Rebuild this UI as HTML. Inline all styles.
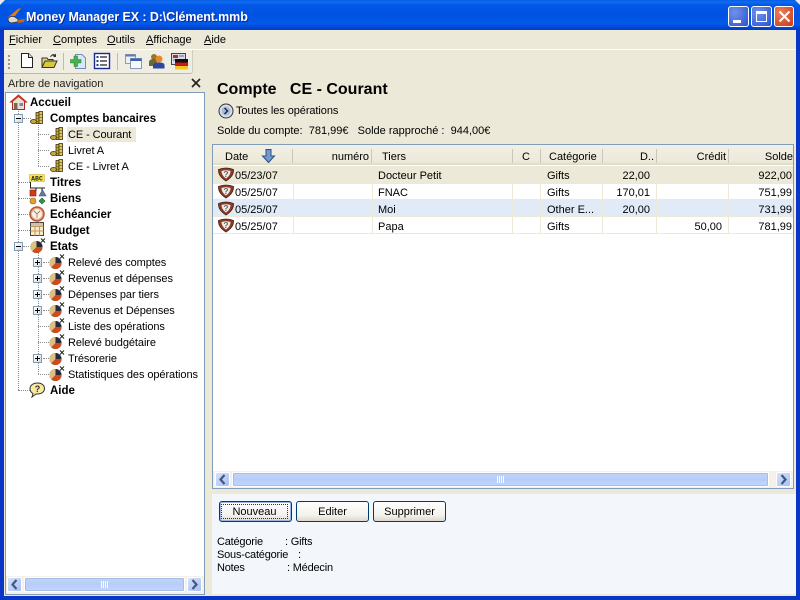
<!DOCTYPE html>
<html><head><meta charset="utf-8">
<style>
html,body{margin:0;padding:0;width:800px;height:600px;overflow:hidden;background:#0a36c8}
body{position:relative;font:11px/14px "Liberation Sans",sans-serif;color:#000}
.a,.t{position:absolute;white-space:nowrap}
.t{line-height:14px;margin-top:1px}
.b{font-weight:bold;letter-spacing:0;font-size:11.5px}
.l{letter-spacing:-.08px}
.n{letter-spacing:-.2px}
svg{position:absolute;overflow:visible}
.m{text-decoration:none}
.m u{text-decoration:underline}
.r{text-align:right}
.btn{position:absolute;top:501px;height:19px;border:1px solid #003c74;border-radius:3px;background:linear-gradient(#fff,#f3f2ec 70%,#dcd8cc);text-align:center;line-height:20px}
.sb{position:absolute;height:15px;border-radius:2px;background:linear-gradient(#c3d3fb,#b6cdfa 50%,#c6d6fc);border:1px solid #fff;box-sizing:border-box;box-shadow:0 0 0 1px #a8bce8 inset}
.ar{position:absolute;width:15px;height:15px;border-radius:2px;background:linear-gradient(135deg,#d4e0fd,#aac0f4);border:1px solid #fff;box-sizing:border-box}
.vl{position:absolute;width:1px;background:#ece9d8}
.hd{position:absolute;width:1px;top:149px;height:14px;background:#cbc7b8}
.exp{position:absolute;width:9px;height:9px;box-sizing:border-box;border:1px solid #7f9db9;background:linear-gradient(135deg,#fff,#dcd8cc)}
.exp:before{content:"";position:absolute;left:1px;top:3px;width:5px;height:1px;background:#000}
.exp.p:after{content:"";position:absolute;left:3px;top:1px;width:1px;height:5px;background:#000}
.dv{position:absolute;border-left:1px dotted #8a8a8a}
.dh{position:absolute;border-top:1px dotted #8a8a8a}
</style></head><body>
<svg width="0" height="0" style="position:absolute"><defs>
<g id="coin"><rect x="6" y="1.500" width="3" height="11" fill="#c9a93e" stroke="#3c3210" stroke-width=".8"/><rect x="9" y="0.500" width="3.500" height="12" fill="#e0c45c" stroke="#3c3210" stroke-width=".8"/><ellipse cx="3.500" cy="10.500" rx="3" ry="2" fill="#c9a93e" stroke="#3c3210" stroke-width=".8"/><path d="M6 4.500h3M6 7.500h3M6 10.500h3M9 3.500h3.500M9 6.500h3.500M9 9.500h3.500" stroke="#4c4014" stroke-width=".6"/></g>
<g id="pie"><circle cx="6.500" cy="9" r="6" fill="#3c3c3c"/><path d="M6.500 9V3A6 6 0 0 1 12.500 9Z" fill="#262a3a"/><path d="M6.500 9H12.500A6 6 0 0 1 2.300 13.300Z" fill="#d24a1a"/><path d="M6.500 9L2.300 13.300A6 6 0 0 1 6.500 3Z" fill="#dcc080"/><path d="M11 .5l4 4M15 .5l-4 4" stroke="#222" stroke-width="1"/></g>
<g id="shield"><path d="M.5 2.500Q8-.5 15.500 2.500Q16 9 8 14Q0 9 .5 2.500Z" fill="#8c3a24" stroke="#4a2418" stroke-width=".8"/><path d="M3.500 4Q8 2.500 12.500 4Q12.500 8.500 8 11.500Q3.500 8.500 3.500 4Z" fill="#f2ece6"/><text x="8" y="10" font-size="8.500" font-weight="bold" text-anchor="middle" font-family="Liberation Sans" fill="#666">?</text></g>
<g id="lft"><path d="M9.500 3L5.500 7.500L9.500 12" fill="none" stroke="#43587e" stroke-width="2.200"/></g>
<g id="rgt"><path d="M5.500 3L9.500 7.500L5.500 12" fill="none" stroke="#43587e" stroke-width="2.200"/></g>
</defs></svg>

<!-- title bar -->
<div class="a" style="left:0;top:0;width:800px;height:30px;background:linear-gradient(#0a5ce0 0,#0b6cf4 2px,#0457e6 5px,#0053e1 14px,#0258ea 24px,#0040c8 29px);border-radius:7px 7px 0 0"></div>
<div class="a" style="left:0;top:0;width:5px;height:5px;background:#e8e8e8;clip-path:polygon(0 0,100% 0,0 100%)"></div>
<div class="a" style="left:795px;top:0;width:5px;height:5px;background:#e8e8e8;clip-path:polygon(0 0,100% 0,100% 100%)"></div>
<svg style="left:6px;top:7px" width="18" height="18"><path d="M1 11L12 2L15 1L9 9Z" fill="#e07a1e"/><path d="M2 12Q4 8 9 10L13 13L11 15L5 16Q2 15 2 12Z" fill="#d8d8d8" stroke="#333" stroke-width=".8"/><path d="M11 13L19 12L18 15L12 16Z" fill="#c8641a"/></svg>
<div class="t" style="left:26px;top:8px;color:#fff;font-size:12.5px;font-weight:bold;letter-spacing:-.1px;line-height:16px;text-shadow:1px 1px 0 #0a2a9c">Money Manager EX : D:\Clément.mmb</div>
<!-- window buttons -->
<div class="a" style="left:728px;top:6px;width:21px;height:21px;box-sizing:border-box;border:1px solid #fff;border-radius:3px;background:radial-gradient(circle at 30% 30%,#6f92ec,#2a52d0)"><div class="a" style="left:4px;top:13px;width:8px;height:3px;background:#fff"></div></div>
<div class="a" style="left:751px;top:6px;width:21px;height:21px;box-sizing:border-box;border:1px solid #fff;border-radius:3px;background:radial-gradient(circle at 30% 30%,#6f92ec,#2a52d0)"><div class="a" style="left:4px;top:4px;width:11px;height:11px;box-sizing:border-box;border:1px solid #fff;border-top-width:3px"></div></div>
<div class="a" style="left:774px;top:6px;width:20px;height:21px;box-sizing:border-box;border:1px solid #fff;border-radius:3px;background:radial-gradient(circle at 30% 30%,#e8805c,#c83a14)"><svg style="left:3px;top:3px" width="13" height="13"><path d="M1.500 1.500L11.500 11.500M11.500 1.500L1.500 11.500" stroke="#fff" stroke-width="2"/></svg></div>

<!-- client -->
<div class="a" style="left:4px;top:30px;width:792px;height:566px;background:#ece9d8"></div>
<div class="a" style="left:4px;top:49px;width:792px;height:1px;background:#fff"></div>
<div class="t m" style="left:9px;top:32px"><u>F</u>ichier</div>
<div class="t m" style="left:53px;top:32px"><u>C</u>omptes</div>
<div class="t m" style="left:107px;top:32px"><u>O</u>utils</div>
<div class="t m" style="left:146px;top:32px"><u>A</u>ffichage</div>
<div class="t m" style="left:204px;top:32px"><u>A</u>ide</div>

<!-- toolbar -->
<div class="a" style="left:4px;top:50px;width:188px;height:23px;background:#f0eee2;border-bottom:1px solid #bfbcab;border-right:1px solid #d0cdbc;border-radius:0 0 3px 0"></div>
<svg style="left:7px;top:54px" width="4" height="18"><path d="M1 1h2v2H1zM1 5h2v2H1zM1 9h2v2H1zM1 13h2v2H1z" fill="#9a978a"/></svg>
<svg style="left:20px;top:53px" width="14" height="16"><path d="M1.500.5H8.500L12.500 4.500V14.500H1.500Z" fill="#fff" stroke="#222"/><path d="M8.500.5V4.500H12.500" fill="#ddd" stroke="#222"/></svg>
<svg style="left:41px;top:53px" width="17" height="16"><path d="M1 13.500V5H6L7 6.500H12V8" fill="#e8d870" stroke="#333"/><path d="M1 14.500L4 8H16L13 14.500Z" fill="#d8c83c" stroke="#333"/><path d="M9 4Q11 0 14 1.500L15 .5V4H12L13 3Q11 2 10 4" fill="#333"/></svg>
<div class="a" style="left:63px;top:53px;width:1px;height:17px;background:#bfbcab"></div>
<svg style="left:70px;top:53px" width="17" height="17"><path d="M5.500 1.500H12L15.500 5V15.500H5.500Z" fill="#d8e8fa" stroke="#6f8fb8"/><path d="M4 3H7.500V6.500H11V10H7.500V13.500H4V10H.5V6.500H4Z" fill="#48b050" stroke="#2a8a3a" stroke-width=".6"/></svg>
<svg style="left:94px;top:53px" width="16" height="16"><rect x=".5" y=".5" width="15" height="15" fill="#fff" stroke="#1a2a8c" stroke-width="1.400"/><path d="M6 4h7M6 8h7M6 12h7" stroke="#222" stroke-width="1.300"/><path d="M2.500 3h2v2h-2zM2.500 7h2v2h-2zM2.500 11h2v2h-2z" fill="#1a3fa8"/></svg>
<div class="a" style="left:117px;top:53px;width:1px;height:17px;background:#bfbcab"></div>
<svg style="left:125px;top:54px" width="17" height="15"><rect x=".5" y=".5" width="10" height="9" fill="#eef0f4" stroke="#9a9a9a"/><rect x=".5" y=".5" width="10" height="2" fill="#5a7ab8"/><rect x="5.500" y="4.500" width="11" height="10" fill="#f6f8fc" stroke="#8a9ab0"/><rect x="5.500" y="4.500" width="11" height="2.500" fill="#3a60b0"/></svg>
<svg style="left:148px;top:53px" width="17" height="16"><circle cx="6" cy="4" r="3" fill="#a07030"/><path d="M1 13V9Q1 6 6 6Q9 6 9 9V13Z" fill="#6a6a30"/><circle cx="11" cy="6" r="3.500" fill="#e88a2a"/><path d="M5 15.500V12Q5 9.500 11 9.500Q16.500 9.500 16.500 12V15.500Z" fill="#2a48a0"/></svg>
<svg style="left:171px;top:53px" width="17" height="17"><rect x=".5" y=".5" width="14" height="11" fill="#d8dce8" stroke="#444"/><rect x="2" y="2" width="5" height="3" fill="#b03030"/><path d="M2 7h10M8 3h5" stroke="#5a6a9a"/><rect x="4" y="6" width="13" height="3.500" fill="#111"/><rect x="4" y="9.500" width="13" height="3.500" fill="#c81818"/><rect x="4" y="13" width="13" height="3.500" fill="#f0c820"/></svg>

<!-- nav panel -->
<div class="a" style="left:4px;top:74px;width:202px;height:522px;background:#ece9d8"></div>
<div class="t" style="left:8px;top:76px;color:#222">Arbre de navigation</div>
<svg style="left:191px;top:78px" width="10" height="10"><path d="M1 1L9 9M9 1L1 9" stroke="#222" stroke-width="1.700"/></svg>
<div class="a" style="left:5px;top:92px;width:200px;height:503px;box-sizing:border-box;border:1px solid #7f9db9;background:#fff"></div>

<!-- tree lines -->
<div class="dv" style="left:18px;top:108px;height:282px"></div>
<div class="dv" style="left:38px;top:122px;height:44px"></div>
<div class="dv" style="left:38px;top:252px;height:122px"></div>
<div class="dh" style="left:23px;top:118px;width:8px"></div>
<div class="dh" style="left:38px;top:134px;width:11px"></div>
<div class="dh" style="left:38px;top:150px;width:11px"></div>
<div class="dh" style="left:38px;top:166px;width:11px"></div>
<div class="dh" style="left:18px;top:182px;width:12px"></div>
<div class="dh" style="left:18px;top:198px;width:12px"></div>
<div class="dh" style="left:18px;top:214px;width:12px"></div>
<div class="dh" style="left:18px;top:230px;width:12px"></div>
<div class="dh" style="left:23px;top:246px;width:8px"></div>
<div class="dh" style="left:18px;top:390px;width:12px"></div>
<div class="dh" style="left:43px;top:262px;width:6px"></div>
<div class="dh" style="left:43px;top:278px;width:6px"></div>
<div class="dh" style="left:43px;top:294px;width:6px"></div>
<div class="dh" style="left:43px;top:310px;width:6px"></div>
<div class="dh" style="left:38px;top:326px;width:11px"></div>
<div class="dh" style="left:38px;top:342px;width:11px"></div>
<div class="dh" style="left:43px;top:358px;width:6px"></div>
<div class="dh" style="left:38px;top:374px;width:11px"></div>

<div class="exp" style="left:14px;top:114px"></div>
<div class="exp" style="left:14px;top:242px"></div>
<div class="exp p" style="left:33px;top:258px"></div>
<div class="exp p" style="left:33px;top:274px"></div>
<div class="exp p" style="left:33px;top:290px"></div>
<div class="exp p" style="left:33px;top:306px"></div>
<div class="exp p" style="left:33px;top:354px"></div>

<!-- tree icons -->
<svg style="left:10px;top:94px" width="17" height="16"><path d="M8.500 1L16.500 8H14.500V15.500H2.500V8H.5Z" fill="#e8e0d0" stroke="#b02818" stroke-width="1"/><path d="M8.500 1L16.500 8L14.500 8L8.500 3L2.500 8L.5 8Z" fill="#d03020"/><rect x="4" y="9" width="3.500" height="6.500" fill="#786858"/><rect x="9.500" y="9" width="3.500" height="3" fill="#6a8ac0"/></svg>
<svg style="left:30px;top:111px" width="15" height="15"><use href="#coin"/></svg>
<svg style="left:50px;top:127px" width="15" height="15"><use href="#coin"/></svg>
<svg style="left:50px;top:143px" width="15" height="15"><use href="#coin"/></svg>
<svg style="left:50px;top:159px" width="15" height="15"><use href="#coin"/></svg>
<svg style="left:29px;top:174px" width="17" height="10"><rect x=".5" y=".5" width="15" height="7" fill="#f8e850" stroke="#c8a020" stroke-dasharray="1 1"/><text x="8" y="6.500" font-size="6.500" font-weight="bold" text-anchor="middle" font-family="Liberation Mono" fill="#222">ABC</text></svg>
<svg style="left:28px;top:182px" width="18" height="24"><path d="M2.500 0V6H17M8 6V9M14 6V9" stroke="#222" fill="none"/><rect x="2" y="8" width="6" height="6" fill="#d83818" stroke="#7a2010" stroke-width=".6"/><path d="M11 14L14.500 8L18 14Z" fill="#6a7a9a" stroke="#3a4a6a" stroke-width=".6"/><circle cx="5" cy="19" r="3" fill="#e8a030" stroke="#8a5a10" stroke-width=".6"/><path d="M14 16L17 19L14 22L11 19Z" fill="#389048" stroke="#1a6028" stroke-width=".6"/></svg>
<svg style="left:29px;top:206px" width="16" height="16"><circle cx="8" cy="8" r="7" fill="#e8a890" stroke="#b85830" stroke-width="1.500"/><circle cx="8" cy="8" r="5" fill="#f8f4ec"/><path d="M8 8L4.500 4.500M8 8L11 5M8 8V12" stroke="#a88850" stroke-width="1"/></svg>
<svg style="left:30px;top:222px" width="15" height="15"><rect x=".5" y=".5" width="13" height="13" fill="#f6ecc8" stroke="#444"/><path d="M.5 4.500H13.500M.5 9H13.500M5 .5V13.500M9.500 .5V13.500" stroke="#c89858"/><rect x="1" y="1" width="12" height="3" fill="#c8c4b8"/></svg>
<svg style="left:30px;top:238px" width="17" height="16"><use href="#pie"/></svg>
<svg style="left:49px;top:254px" width="17" height="16"><use href="#pie"/></svg>
<svg style="left:49px;top:270px" width="17" height="16"><use href="#pie"/></svg>
<svg style="left:49px;top:286px" width="17" height="16"><use href="#pie"/></svg>
<svg style="left:49px;top:302px" width="17" height="16"><use href="#pie"/></svg>
<svg style="left:49px;top:318px" width="17" height="16"><use href="#pie"/></svg>
<svg style="left:49px;top:334px" width="17" height="16"><use href="#pie"/></svg>
<svg style="left:49px;top:350px" width="17" height="16"><use href="#pie"/></svg>
<svg style="left:49px;top:366px" width="17" height="16"><use href="#pie"/></svg>
<svg style="left:29px;top:382px" width="17" height="17"><path d="M8.500 1C13 1 15.500 3.500 15.500 6.500C15.500 9.500 13 12 8.500 12H7L3 15L4 11.500C2 10.500 1 8.500 1 6.500C1 3.500 4 1 8.500 1Z" fill="#f8e8a0" stroke="#333"/><text x="8.500" y="10" font-size="9" font-weight="bold" text-anchor="middle" font-family="Liberation Sans" fill="#333">?</text></svg>

<!-- tree labels -->
<div class="t b" style="left:30px;top:95px">Accueil</div>
<div class="t b" style="left:50px;top:111px">Comptes bancaires</div>
<div class="a" style="left:67px;top:127px;width:69px;height:15px;background:#ece9d8"></div>
<div class="t l" style="left:68px;top:127px">CE - Courant</div>
<div class="t l" style="left:68px;top:143px">Livret A</div>
<div class="t l" style="left:68px;top:159px">CE - Livret A</div>
<div class="t b" style="left:50px;top:175px">Titres</div>
<div class="t b" style="left:50px;top:191px">Biens</div>
<div class="t b" style="left:50px;top:207px">Echéancier</div>
<div class="t b" style="left:50px;top:223px">Budget</div>
<div class="t b" style="left:50px;top:239px">Etats</div>
<div class="t l" style="left:68px;top:255px">Relevé des comptes</div>
<div class="t l" style="left:68px;top:271px">Revenus et dépenses</div>
<div class="t l" style="left:68px;top:287px">Dépenses par tiers</div>
<div class="t l" style="left:68px;top:303px">Revenus et Dépenses</div>
<div class="t l" style="left:68px;top:319px">Liste des opérations</div>
<div class="t l" style="left:68px;top:335px">Relevé budgétaire</div>
<div class="t l" style="left:68px;top:351px">Trésorerie</div>
<div class="t l" style="left:68px;top:367px">Statistiques des opérations</div>
<div class="t b" style="left:50px;top:383px">Aide</div>

<!-- nav scrollbar -->
<div class="a" style="left:6px;top:576px;width:198px;height:18px;background:#f3f1e8"></div>
<div class="ar" style="left:7px;top:577px"><svg style="left:0;top:0" width="13" height="13"><use href="#lft" transform="translate(-1 -1)"/></svg></div>
<div class="sb" style="left:24px;top:577px;width:161px"><svg style="left:76px;top:3px" width="8" height="8"><path d="M.5 0v7M2.500 0v7M4.500 0v7M6.500 0v7" stroke="#fff"/></svg></div>
<div class="ar" style="left:187px;top:577px"><svg style="left:0;top:0" width="13" height="13"><use href="#rgt" transform="translate(-1 -1)"/></svg></div>

<!-- right header -->
<div class="t" style="left:217px;top:79px;font-size:16px;font-weight:bold;letter-spacing:0;line-height:20px">Compte&nbsp;&nbsp; CE - Courant</div>
<svg style="left:218px;top:103px" width="16" height="16"><circle cx="8" cy="8" r="7" fill="#d8dde8" stroke="#333"/><circle cx="8" cy="8" r="4.500" fill="#a8bcd8"/><path d="M6.500 5L9.500 8L6.500 11" fill="none" stroke="#1a2a5a" stroke-width="1.500"/></svg>
<div class="t l" style="left:236px;top:103px">Toutes les opérations</div>
<div class="t" style="left:217px;top:123px">Solde du compte:&nbsp; 781,99€&nbsp;&nbsp; Solde rapproché :&nbsp; 944,00€</div>

<!-- grid -->
<div class="a" style="left:212px;top:144px;width:582px;height:345px;box-sizing:border-box;border:1px solid #7f9db9;background:#fff"></div>
<div class="a" style="left:213px;top:145px;width:580px;height:20px;background:linear-gradient(#f2f0e6 0,#ece9d8 85%,#dcd8c8 100%)"></div>
<div class="hd" style="left:292px"></div><div class="hd" style="left:371px"></div><div class="hd" style="left:512px"></div><div class="hd" style="left:540px"></div><div class="hd" style="left:602px"></div><div class="hd" style="left:656px"></div><div class="hd" style="left:728px"></div>
<div class="t" style="left:225px;top:149px">Date</div>
<svg style="left:262px;top:149px" width="13" height="14"><path d="M4 .5H9V7H12.500L6.500 13.500L.5 7H4Z" fill="#6f9bd0" stroke="#2f4f7f"/></svg>
<div class="t r" style="left:300px;top:149px;width:69px">numéro</div>
<div class="t" style="left:382px;top:149px">Tiers</div>
<div class="t" style="left:522px;top:149px">C</div>
<div class="t" style="left:549px;top:149px">Catégorie</div>
<div class="t r" style="left:610px;top:149px;width:44px">D..</div>
<div class="t r" style="left:660px;top:149px;width:66px">Crédit</div>
<div class="t r" style="left:735px;top:149px;width:58px">Solde</div>

<div class="a" style="left:213px;top:166px;width:580px;height:17px;background:#ece9d8"></div>
<div class="a" style="left:213px;top:200px;width:580px;height:17px;background:#e1ebf8"></div>
<div class="a" style="left:213px;top:183px;width:580px;height:1px;background:#ece9d8"></div>
<div class="a" style="left:213px;top:199px;width:580px;height:1px;background:#ece9d8"></div>
<div class="a" style="left:213px;top:216px;width:580px;height:1px;background:#ece9d8"></div>
<div class="a" style="left:213px;top:233px;width:580px;height:1px;background:#ece9d8"></div>
<div class="vl" style="left:293px;top:166px;height:67px"></div><div class="vl" style="left:372px;top:166px;height:67px"></div><div class="vl" style="left:512px;top:166px;height:67px"></div><div class="vl" style="left:540px;top:166px;height:67px"></div><div class="vl" style="left:602px;top:166px;height:67px"></div><div class="vl" style="left:656px;top:166px;height:67px"></div><div class="vl" style="left:728px;top:166px;height:67px"></div>

<svg style="left:218px;top:167px" width="16" height="16"><use href="#shield"/></svg>
<svg style="left:218px;top:184px" width="16" height="16"><use href="#shield"/></svg>
<svg style="left:218px;top:201px" width="16" height="16"><use href="#shield"/></svg>
<svg style="left:218px;top:218px" width="16" height="16"><use href="#shield"/></svg>

<div class="t" style="left:235px;top:168px">05/23/07</div><div class="t" style="left:378px;top:168px">Docteur Petit</div><div class="t" style="left:547px;top:168px">Gifts</div><div class="t r" style="left:610px;top:168px;width:40px">22,00</div><div class="t r" style="left:735px;top:168px;width:57px">922,00</div>
<div class="t" style="left:235px;top:185px">05/25/07</div><div class="t" style="left:378px;top:185px">FNAC</div><div class="t" style="left:547px;top:185px">Gifts</div><div class="t r" style="left:610px;top:185px;width:40px">170,01</div><div class="t r" style="left:735px;top:185px;width:57px">751,99</div>
<div class="t" style="left:235px;top:202px">05/25/07</div><div class="t" style="left:378px;top:202px">Moi</div><div class="t" style="left:547px;top:202px">Other E...</div><div class="t r" style="left:610px;top:202px;width:40px">20,00</div><div class="t r" style="left:735px;top:202px;width:57px">731,99</div>
<div class="t" style="left:235px;top:219px">05/25/07</div><div class="t" style="left:378px;top:219px">Papa</div><div class="t" style="left:547px;top:219px">Gifts</div><div class="t r" style="left:660px;top:219px;width:62px">50,00</div><div class="t r" style="left:735px;top:219px;width:57px">781,99</div>

<!-- grid scrollbar -->
<div class="a" style="left:213px;top:471px;width:580px;height:17px;background:#f3f1e8"></div>
<div class="ar" style="left:215px;top:472px"><svg style="left:0;top:0" width="13" height="13"><use href="#lft" transform="translate(-1 -1)"/></svg></div>
<div class="sb" style="left:232px;top:472px;width:537px"><svg style="left:264px;top:3px" width="8" height="8"><path d="M.5 0v7M2.500 0v7M4.500 0v7M6.500 0v7" stroke="#fff"/></svg></div>
<div class="ar" style="left:776px;top:472px"><svg style="left:0;top:0" width="13" height="13"><use href="#rgt" transform="translate(-1 -1)"/></svg></div>

<!-- bottom panel -->
<div class="a" style="left:212px;top:494px;width:584px;height:100px;background:#f3f6fb"></div>
<div class="btn" style="left:219px;width:71px;box-shadow:inset 0 0 0 1px #9cb6e0"><span style="position:absolute;left:2px;right:2px;top:2px;bottom:2px;border:1px dotted #333;line-height:14px;margin-left:-1px;margin-right:1px;border-left-color:#333">Nouveau</span></div>
<div class="btn" style="left:296px;width:71px">Editer</div>
<div class="btn" style="left:373px;width:71px">Supprimer</div>
<div class="t n" style="left:217px;top:534px">Catégorie</div><div class="t n" style="left:285px;top:534px">: Gifts</div>
<div class="t n" style="left:217px;top:547px">Sous-catégorie</div><div class="t n" style="left:298px;top:547px">:</div>
<div class="t n" style="left:217px;top:560px">Notes</div><div class="t n" style="left:293px;top:560px;margin-left:-6px">: Médecin</div>
</body></html>
